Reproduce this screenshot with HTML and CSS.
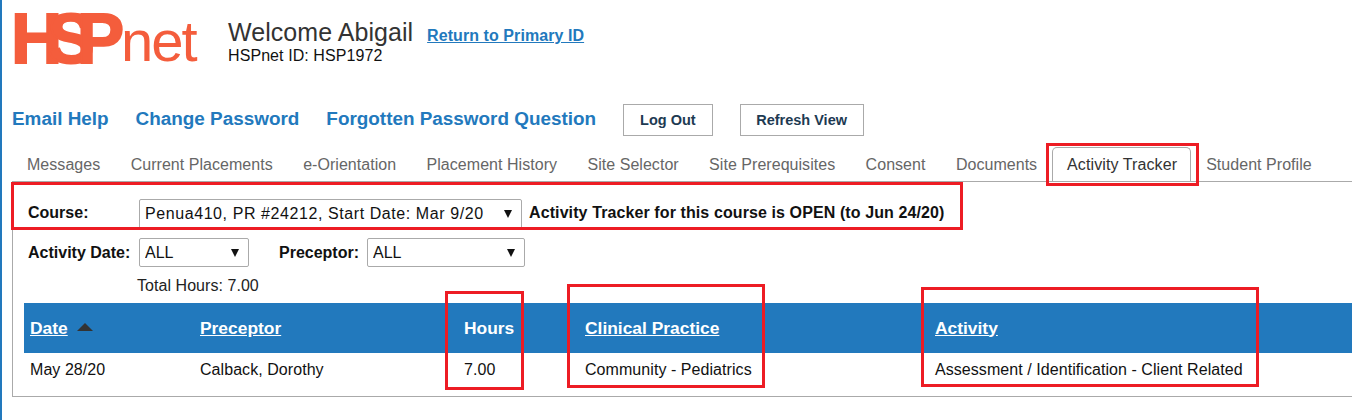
FILE: index.html
```html
<!DOCTYPE html>
<html lang="en">
<head>
    <meta charset="UTF-8">
    <meta name="viewport" content="width=device-width, initial-scale=1.0">
    <title>HSPnet Activity Tracker</title>
    <link rel="stylesheet" href="styles.css">
</head>
<body>
    <div class="header">
        <div class="logo"><span class="logo-h">H</span><span class="logo-s">S</span><span class="logo-p">P</span><span class="logo-net">net</span></div>
        <div class="welcome">
            <div class="welcome-top">
                <h1>Welcome Abigail</h1>
                <a href="#" class="return-link">Return to Primary ID</a>
            </div>
            <div class="hsp-id">HSPnet ID: HSP1972</div>
        </div>
    </div>

    <div class="nav">
        <a href="#">Email Help</a>
        <a href="#">Change Password</a>
        <a href="#">Forgotten Password Question</a>
        <button class="btn btn-logout">Log Out</button>
        <button class="btn">Refresh View</button>
    </div>

    <div class="tabs">
        <a href="#" class="tab">Messages</a>
        <a href="#" class="tab">Current Placements</a>
        <a href="#" class="tab">e-Orientation</a>
        <a href="#" class="tab">Placement History</a>
        <a href="#" class="tab">Site Selector</a>
        <a href="#" class="tab">Site Prerequisites</a>
        <a href="#" class="tab">Consent</a>
        <a href="#" class="tab">Documents</a>
        <a href="#" class="tab active">Activity Tracker</a>
        <a href="#" class="tab">Student Profile</a>
    </div>

    <div class="panel">
        <div class="course-row">
            <label class="course-label">Course:</label>
            <div class="select-wrap course-select">
                <select><option>Penua410, PR #24212, Start Date: Mar 9/20</option></select>
            </div>
            <strong class="course-status">Activity Tracker for this course is OPEN (to Jun 24/20)</strong>
        </div>

        <div class="filter-row">
            <label class="date-label">Activity Date:</label>
            <div class="select-wrap date-select">
                <select><option>ALL</option></select>
            </div>
            <label class="preceptor-label">Preceptor:</label>
            <div class="select-wrap preceptor-select">
                <select><option>ALL</option></select>
            </div>
        </div>

        <div class="total">Total Hours: 7.00</div>

        <table class="records">
            <thead>
                <tr>
                    <th class="col-date"><a href="#">Date</a><span class="sort-up"></span></th>
                    <th class="col-preceptor"><a href="#">Preceptor</a></th>
                    <th class="col-hours">Hours</th>
                    <th class="col-practice"><a href="#">Clinical Practice</a></th>
                    <th><a href="#">Activity</a></th>
                </tr>
            </thead>
            <tbody>
                <tr>
                    <td>May 28/20</td>
                    <td>Calback, Dorothy</td>
                    <td>7.00</td>
                    <td>Community - Pediatrics</td>
                    <td>Assessment / Identification - Client Related</td>
                </tr>
            </tbody>
        </table>
    </div>

    <!-- Red annotation boxes drawn over the screenshot -->
    <div class="mark mark-tab"></div>
    <div class="mark mark-course"></div>
    <div class="mark mark-hours"></div>
    <div class="mark mark-practice"></div>
    <div class="mark mark-activity"></div>
</body>
</html>
```

FILE: styles.css
```css
html {
    height: 100%;
}
body {
    font-family: "Liberation Sans", Arial, sans-serif;
    margin: 0;
    min-height: 100%;
    box-sizing: border-box;
    border-left: 2px solid #2279bd;
    background-color: white;
    color: #111;
    overflow: hidden;
    position: relative;
}
a {
    color: #2279bd;
}
.header {
    display: flex;
    height: 78px;
    padding-left: 12px;
}
.logo {
    display: flex;
    width: 214px;
    height: 78px;
    color: #f45d3c;
    font-size: 71px;
    font-weight: bold;
    line-height: 78px;
}
.logo-h, .logo-s, .logo-p {
    -webkit-text-stroke: 2px #f45d3c;
}
.logo-h {
    margin-left: -3px;
    letter-spacing: -15px;
}
.logo-s {
    letter-spacing: -18px;
}
.logo-p {
    letter-spacing: -3px;
}
.logo-net {
    font-size: 58px;
    font-weight: normal;
    letter-spacing: -2px;
    line-height: 82px;
}
.welcome {
    padding-top: 17px;
}
.welcome-top {
    display: flex;
    align-items: baseline;
    gap: 14px;
}
h1 {
    margin: 0;
    font-size: 25px;
    font-weight: normal;
    letter-spacing: 0.05px;
    line-height: 30px;
    color: #333;
}
.return-link {
    font-size: 16px;
    font-weight: bold;
    letter-spacing: 0.07px;
}
.hsp-id {
    font-size: 16px;
    letter-spacing: 0.08px;
    line-height: 18px;
}
.nav {
    display: flex;
    align-items: center;
    height: 32px;
    margin-top: 26px;
    padding-left: 10px;
}
.nav a {
    margin-right: 27px;
    margin-bottom: 2px;
    font-size: 18.9px;
    font-weight: bold;
    text-decoration: none;
}
.btn {
    height: 32px;
    padding: 0 15.5px;
    margin-right: 27px;
    border: 1px solid #aaa;
    background-color: white;
    color: #1d3a52;
    font-family: inherit;
    font-size: 14.5px;
    font-weight: bold;
}
.btn-logout {
    padding: 0 16px;
}
.tabs {
    display: flex;
    height: 40px;
    margin-top: 5px;
    margin-left: 10px;
    padding-left: 4px;
    box-sizing: border-box;
    align-items: flex-end;
}
.tab {
    display: block;
    height: 34px;
    box-sizing: border-box;
    padding: 8px 11px 0;
    margin-right: 8.4px;
    color: #666;
    font-size: 16px;
    letter-spacing: 0.04px;
    line-height: 20px;
    text-decoration: none;
}
.tab.active {
    margin-left: -4.5px;
    margin-right: 4px;
    padding: 7px 13px 0 14px;
    border: 1px solid #aaa;
    border-bottom: none;
    border-radius: 5px 5px 0 0;
    color: #333;
    letter-spacing: 0.1px;
}
.panel {
    margin-left: 10px;
    padding: 0 0 0 11px;
    height: 216px;
    box-sizing: border-box;
    border-top: 1px solid #aaa;
    border-left: 1px solid #aaa;
    border-bottom: 1px solid #aaa;
}
.course-row, .filter-row {
    display: flex;
    align-items: center;
    padding-left: 4px;
    font-size: 16px;
}
.course-row {
    padding-top: 17px;
    height: 30px;
}
.filter-row {
    margin-top: 9px;
    height: 29px;
}
.course-row label, .course-status {
    margin-bottom: 2px;
}
.course-row label, .filter-row label, .course-status {
    font-weight: bold;
}
.course-label {
    width: 111px;
}
.date-label {
    width: 111px;
}
.preceptor-label {
    margin-left: 30px;
    width: 88px;
}
.select-wrap {
    position: relative;
    height: 100%;
}
.select-wrap select {
    appearance: none;
    width: 100%;
    height: 100%;
    padding: 0 0 0 5px;
    border: 1px solid #aaa;
    border-radius: 2px;
    background-color: white;
    color: #111;
    font-family: inherit;
    font-size: 16px;
}
.select-wrap::after {
    content: "";
    position: absolute;
    right: 10px;
    top: 11px;
    border-left: 4px solid transparent;
    border-right: 4px solid transparent;
    border-top: 8px solid #111;
}
.course-select {
    width: 383px;
}
.course-select select {
    padding-bottom: 2px;
    letter-spacing: 0.58px;
}
.course-status {
    margin-left: 7px;
    letter-spacing: 0.1px;
    white-space: nowrap;
}
.date-select {
    width: 110px;
}
.preceptor-select {
    width: 158px;
}
.total {
    margin-top: 10px;
    padding-left: 113px;
    font-size: 16px;
    letter-spacing: 0.05px;
    line-height: 18px;
    color: #222;
}
.records {
    width: 1328px;
    margin-top: 8px;
    border-collapse: collapse;
}
.records th {
    height: 50px;
    padding: 0 6px;
    background-color: #2279bd;
    color: white;
    font-size: 17.4px;
    font-weight: bold;
    text-align: left;
}
.records th a {
    color: white;
}
.records td {
    height: 33px;
    padding: 0 6px;
    font-size: 16px;
    letter-spacing: 0.06px;
}
.col-date {
    width: 158px;
}
.col-preceptor {
    width: 252px;
}
.col-hours {
    width: 109px;
}
.col-practice {
    width: 338px;
}
.sort-up {
    display: inline-block;
    margin-left: 9px;
    vertical-align: 3px;
    border-left: 8px solid transparent;
    border-right: 8px solid transparent;
    border-bottom: 8px solid #333;
}
.mark {
    position: absolute;
    box-sizing: border-box;
    border: 3px solid #ed1c24;
}
.mark-tab {
    left: 1044px;
    top: 143px;
    width: 153px;
    height: 43px;
}
.mark-course {
    left: 9px;
    top: 182px;
    width: 952px;
    height: 48px;
}
.mark-hours {
    left: 443px;
    top: 291px;
    width: 79px;
    height: 99px;
}
.mark-practice {
    left: 565px;
    top: 284px;
    width: 198px;
    height: 104px;
}
.mark-activity {
    left: 919px;
    top: 287px;
    width: 338px;
    height: 100px;
}
```
